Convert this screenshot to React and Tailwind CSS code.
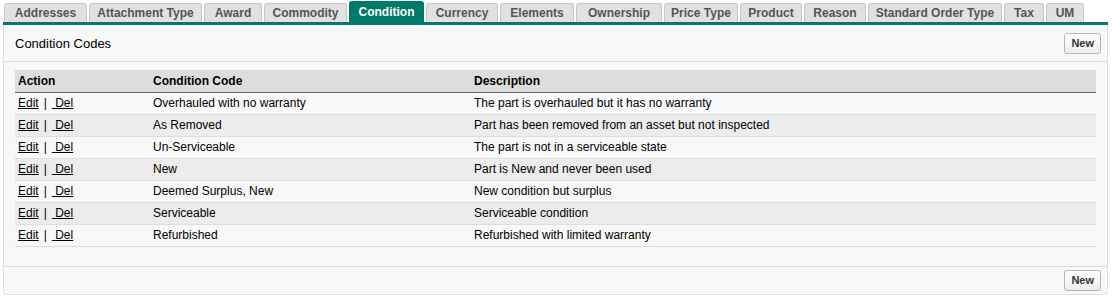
import React from 'react';

const tabs = [
  ['Addresses', 'w-[83px]'],
  ['Attachment Type', 'w-[113px]'],
  ['Award', 'w-[58px]'],
  ['Commodity', 'w-[83px]'],
  ['Condition', 'w-[75px]'],
  ['Currency', 'w-[72px]'],
  ['Elements', 'w-[74px]'],
  ['Ownership', 'w-[86px]'],
  ['Price Type', 'w-[74px]'],
  ['Product', 'w-[62px]'],
  ['Reason', 'w-[62px]'],
  ['Standard Order Type', 'w-[134px]'],
  ['Tax', 'w-[40px]'],
  ['UM', 'w-[38px]'],
];

const rows = [
  ['Overhauled with no warranty', 'The part is overhauled but it has no warranty'],
  ['As Removed', 'Part has been removed from an asset but not inspected'],
  ['Un-Serviceable', 'The part is not in a serviceable state'],
  ['New', 'Part is New and never been used'],
  ['Deemed Surplus, New', 'New condition but surplus'],
  ['Serviceable', 'Serviceable condition'],
  ['Refurbished', 'Refurbished with limited warranty'],
];

function NewButton() {
  return (
    <button className="h-[21px] px-[6px] rounded-[3px] border border-[#b5b5b5] bg-gradient-to-b from-white to-[#ececec] text-[11px] font-bold text-[#333]">
      New
    </button>
  );
}

export default function App() {
  return (
    <div className="w-[1112px] h-[297px] bg-white pt-[1px] px-[3px] font-['Liberation_Sans',Arial,sans-serif] text-[12px] text-black">
      <div className="flex items-end gap-[2px] pl-[1px] h-[21px]">
        {tabs.map(([t, w]) => {
          const active = t === 'Condition';
          return (
            <div
              key={t}
              className={
                w + ' shrink-0 whitespace-nowrap flex items-center justify-center rounded-t-[3px] font-bold text-[12px] ' +
                (active
                  ? 'h-[21px] bg-[#007b69] text-white'
                  : 'h-[19px] bg-[#e1e1e1] text-[#555] border border-b-0 border-[#c8c8c8]')
              }
            >
              {t}
            </div>
          );
        })}
      </div>
      <div className="h-[3px] bg-[#007b69] mr-[1px]" />
      <div className="h-[270px] bg-[#f8f8f8] border border-t-0 border-[#e0e0e0] rounded-b-[4px] flex flex-col mr-[1px]">
        <div className="h-[37px] pt-[1px] flex items-center justify-between pl-[11px] pr-[6px] border-b border-[#dcdcdc]">
          <span className="text-[13px] text-black">Condition Codes</span>
          <NewButton />
        </div>
        <div className="pt-[8px] pl-[11px] pr-[11px] flex-1">
          <table className="w-full border-collapse text-[12px]">
            <thead>
              <tr className="h-[22px] bg-[#dddddd] border-b border-[#666]">
                <th className="text-left font-bold pl-[3px] w-[138px]">Action</th>
                <th className="text-left font-bold w-[321px]">Condition Code</th>
                <th className="text-left font-bold">Description</th>
              </tr>
            </thead>
            <tbody>
              {rows.map((r, i) => (
                <tr key={r[0]} className={(i % 2 === 1 ? 'bg-[#ececec] ' : '') + 'h-[22px] border-b border-[#dedede]'}>
                  <td className="pl-[3px]">
                    <a className="underline text-black" href="#">Edit</a>
                    <span className="mx-[5px]">|</span>
                    <a className="underline text-black" href="#">&nbsp;Del</a>
                  </td>
                  <td>{r[0]}</td>
                  <td>{r[1]}</td>
                </tr>
              ))}
            </tbody>
          </table>
        </div>
        <div className="h-[28px] flex items-center justify-end pr-[6px] border-t border-[#dcdcdc]">
          <NewButton />
        </div>
      </div>
    </div>
  );
}
